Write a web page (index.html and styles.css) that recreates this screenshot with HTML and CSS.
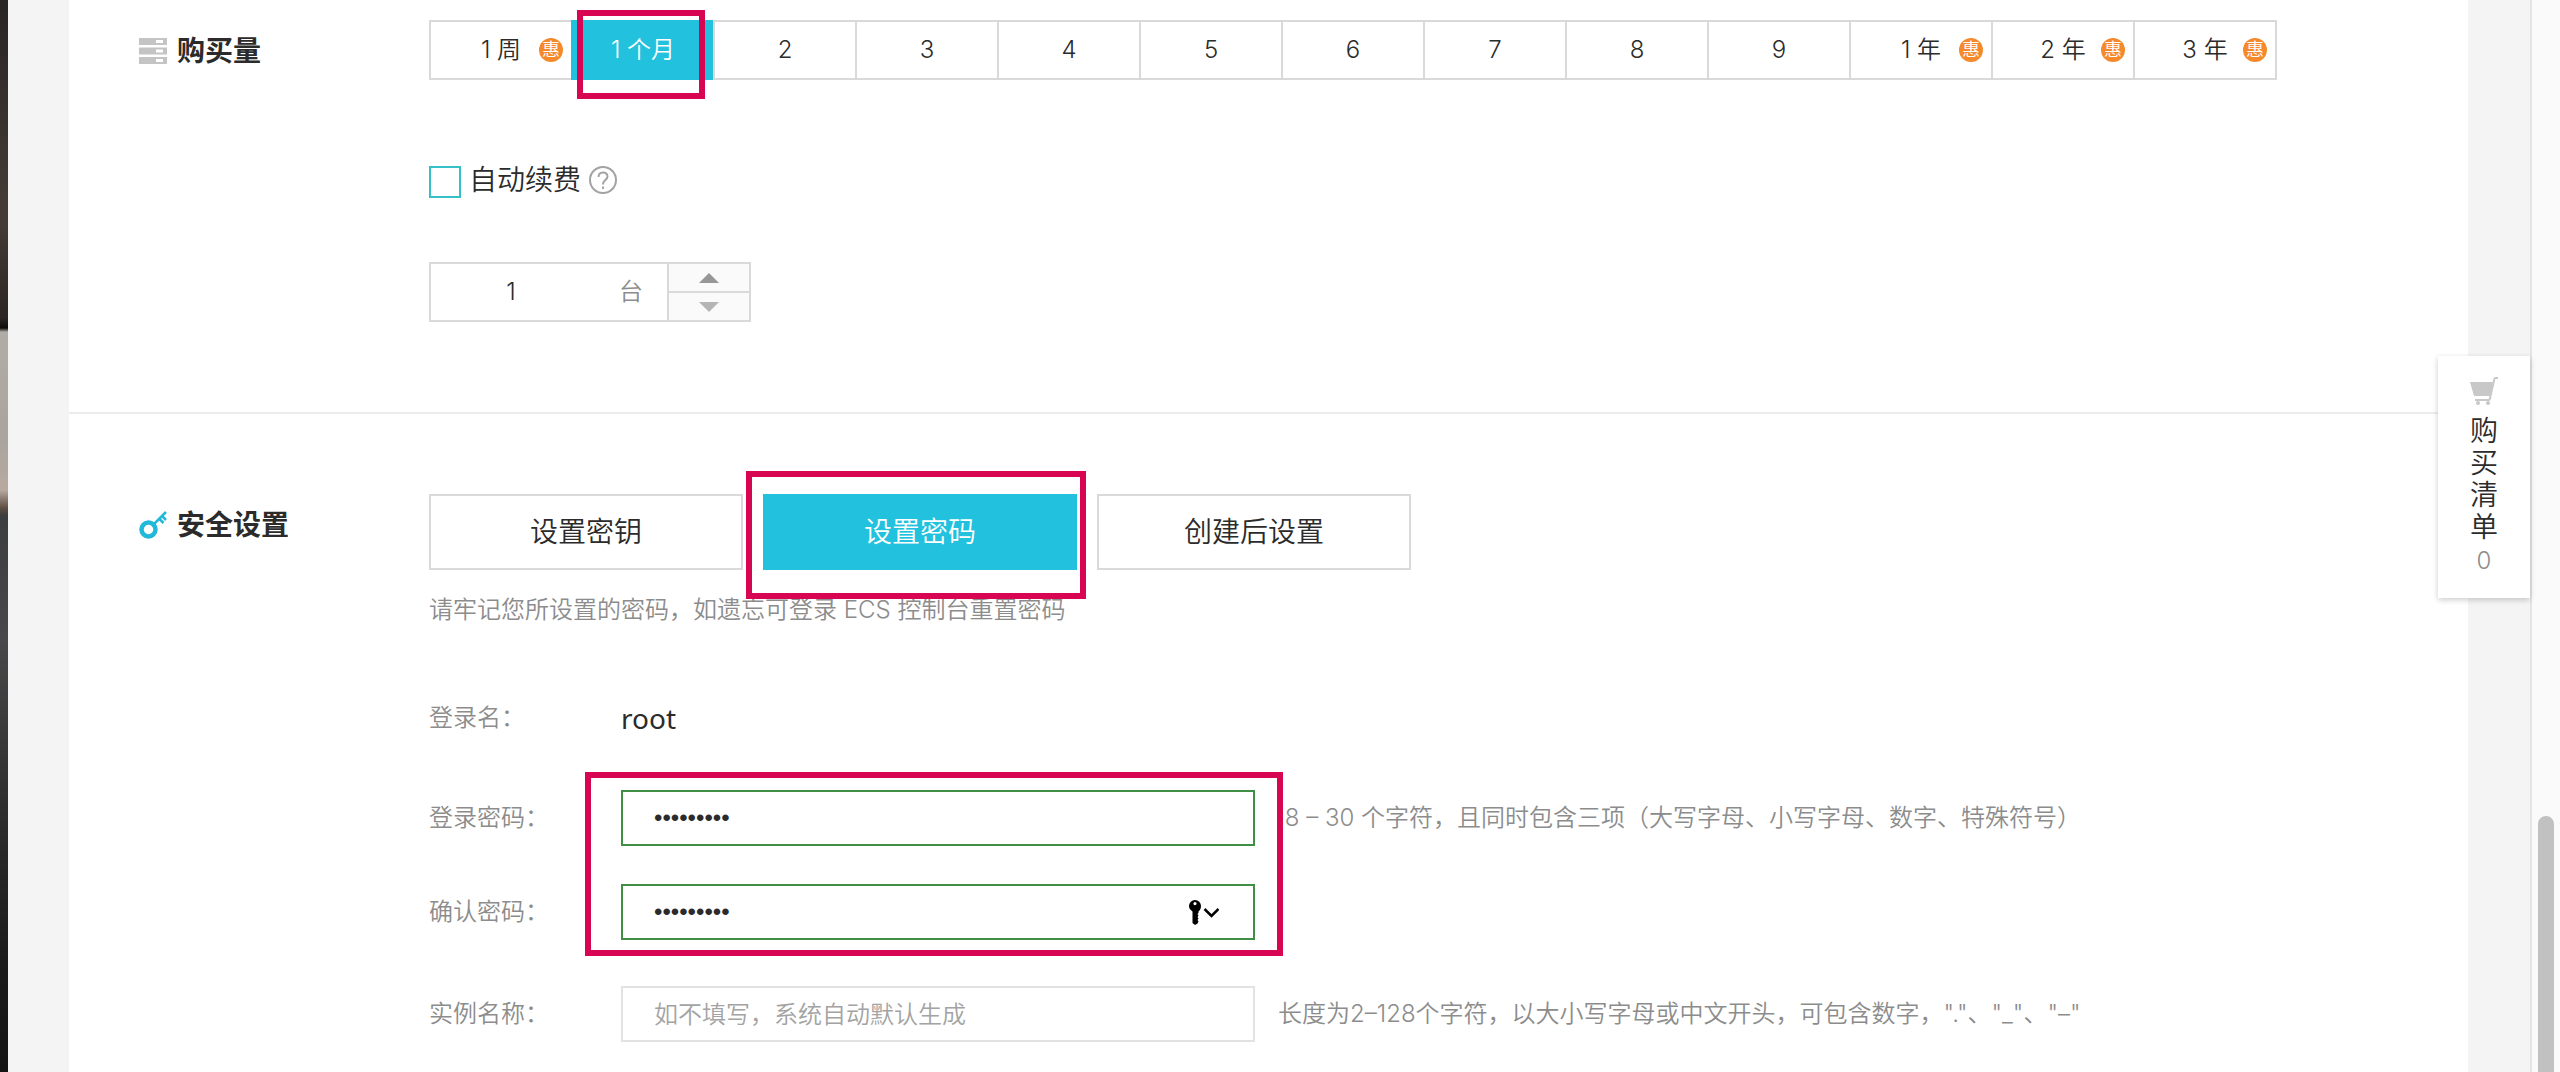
FILE: index.html
```html
<!DOCTYPE html>
<html lang="zh-CN">
<head>
<meta charset="utf-8">
<meta name="viewport" content="width=device-width, initial-scale=1">
<title>云服务器购买</title>
<link rel="stylesheet" href="styles.css">
</head>
<body>
<div class="desktop-edge"></div>
<div class="window">
  <main class="panel">
    <section class="section section-amount">
      <h2 class="section-title">
        <svg class="title-icon" viewBox="0 0 28 26" aria-hidden="true">
          <path fill="#c4c4c4" fill-rule="evenodd" d="M0 0h28v7H0zM17 2v3h7V2zM0 9.500h28v7H0zM17 11.500v3h7v-3zM0 19h28v7H0zM17 21v3h7v-3z"/>
        </svg>
        购买量
      </h2>
      <div class="section-body">
        <div class="durations">
          <button type="button" class="duration">1 周<span class="deal">惠</span></button>
          <button type="button" class="duration is-active">1 个月<span class="marker marker-month"></span></button>
          <button type="button" class="duration">2</button>
          <button type="button" class="duration">3</button>
          <button type="button" class="duration">4</button>
          <button type="button" class="duration">5</button>
          <button type="button" class="duration">6</button>
          <button type="button" class="duration">7</button>
          <button type="button" class="duration">8</button>
          <button type="button" class="duration">9</button>
          <button type="button" class="duration">1 年<span class="deal">惠</span></button>
          <button type="button" class="duration">2 年<span class="deal">惠</span></button>
          <button type="button" class="duration">3 年<span class="deal">惠</span></button>
        </div>
        <div class="renew">
          <input type="checkbox" id="renew" class="renew-box">
          <label for="renew" class="renew-label">自动续费</label>
          <svg class="help" viewBox="0 0 28 28" fill="none" stroke="#a3a3a3" stroke-width="2" aria-hidden="true">
            <circle cx="14" cy="14" r="13"/>
            <path d="M9.500 11c0-6 9-6 9-.6 0 3.600-4.500 3.800-4.500 8"/>
            <path d="M14 20.500v2.500"/>
          </svg>
        </div>
        <div class="stepper">
          <input type="text" class="stepper-value" value="1" aria-label="数量">
          <span class="stepper-unit">台</span>
          <div class="stepper-buttons">
            <button type="button" class="step step-up" aria-label="增加"></button>
            <button type="button" class="step step-down" aria-label="减少"></button>
          </div>
        </div>
      </div>
    </section>

    <section class="section section-security">
      <h2 class="section-title">
        <svg class="title-icon" viewBox="0 0 28 28" fill="none" stroke="#22b8da" aria-hidden="true">
          <circle cx="9.500" cy="18.500" r="7" stroke-width="4.500"/>
          <path stroke-width="2.500" d="M14.500 13.500 27 1M20.500 8l4 4M23 5l4 4"/>
        </svg>
        安全设置
      </h2>
      <div class="section-body">
        <div class="modes">
          <button type="button" class="mode">设置密钥</button>
          <button type="button" class="mode is-active">设置密码<span class="marker marker-mode"></span></button>
          <button type="button" class="mode">创建后设置</button>
        </div>
        <p class="note">请牢记您所设置的密码，如遗忘可登录 ECS 控制台重置密码</p>
        <div class="row row-user">
          <span class="row-label">登录名：</span>
          <span class="username">root</span>
        </div>
        <div class="passwords">
          <div class="row">
            <label class="row-label" for="pwd">登录密码：</label>
            <input type="password" id="pwd" class="field is-valid" value="Passw0rd!">
            <span class="hint">&nbsp;8 – 30 个字符，且同时包含三项（大写字母、小写字母、数字、特殊符号）</span>
          </div>
          <div class="row">
            <label class="row-label" for="pwd2">确认密码：</label>
            <div class="field-wrap">
              <input type="password" id="pwd2" class="field is-valid" value="Passw0rd!">
              <svg class="key" viewBox="0 0 30 25" aria-hidden="true">
                <path fill="#000" fill-rule="evenodd" d="M6 0a6 6 0 0 1 6 6c0 2.500-1 4.300-2.500 5.500v1.500l-1 1 1 1.500-1 1.500 1 1.500-1 1.500 1 1.500-1 2L6 25l-2.500-2V11.500C1.500 10 0 8.500 0 6a6 6 0 0 1 6-6zm0 2a1.600 1.600 0 1 0 0 3.200A1.600 1.600 0 0 0 6 2z"/>
                <path fill="none" stroke="#000" stroke-width="2.500" d="m15.500 9 7 7 7-7"/>
              </svg>
            </div>
          </div>
          <div class="marker marker-passwords"></div>
        </div>
        <div class="row row-name">
          <label class="row-label" for="name">实例名称：</label>
          <input type="text" id="name" class="field" placeholder="如不填写，系统自动默认生成">
          <span class="hint">长度为2–128个字符，以大小写字母或中文开头，可包含数字，"."、"_"、"–"</span>
        </div>
      </div>
    </section>
  </main>

  <aside class="cart">
    <svg class="cart-icon" viewBox="0 0 28 28" aria-hidden="true">
      <path fill="#c8c8c8" d="M0 5h23l-3 14H4z"/>
      <path fill="none" stroke="#c8c8c8" stroke-width="2" d="M28 1h-2.500q-1 0-1.300 1.500L20 21.500q-.3 1.500-1.500 1.500H5"/>
      <circle cx="8" cy="26" r="2" fill="#c8c8c8"/>
      <circle cx="18" cy="26" r="2" fill="#c8c8c8"/>
    </svg>
    <span class="cart-text">购买清单</span>
    <span class="cart-count">0</span>
  </aside>
</div>
<div class="scroll-track"><div class="scroll-thumb"></div></div>
</body>
</html>
```
FILE: styles.css
```css
* {
  box-sizing: border-box;
}

body {
  margin: 0;
  min-height: 100vh;
  display: flex;
  background: #f4f4f4;
  color: #2b2b2b;
  font-family: Inter, "Noto Sans CJK SC", sans-serif;
  font-size: 24px;
  font-weight: 350;
  line-height: 36px;
}

button,
input {
  margin: 0;
  padding: 0;
  border-radius: 0;
  color: inherit;
  font: inherit;
}

/* strip of desktop wallpaper beside the browser window */
.desktop-edge {
  flex: none;
  width: 8px;
  background: linear-gradient(#292523 0, #38322f 120px, #463c37 220px, #2b2523 318px, #0d0b08 328px, #b0aca6 332px, #aaa49e 440px, #b7aaa0 490px, #5e4d43 508px, #3c3d3f 516px, #48484a 640px, #2f2f30 800px, #1b1b1c 960px, #141415 100%);
}

.window {
  position: relative;
  flex: 1;
  min-width: 0;
  padding: 0 62px 0 61px;
}

.panel {
  min-height: 100%;
  background: #fff;
}

.section {
  display: grid;
  grid-template-columns: 290px 1fr;
  padding-left: 70px;
}

.section-amount {
  padding-top: 20px;
  padding-bottom: 90px;
  border-bottom: 2px solid #ececec;
}

.section-security {
  padding-top: 80px;
  padding-bottom: 30px;
}

.section-title {
  display: flex;
  align-items: center;
  gap: 10px;
  height: 62px;
  margin: 0;
  font-size: 28px;
  font-weight: 600;
}

.title-icon {
  width: 28px;
}

.durations {
  display: flex;
}

.duration {
  position: relative;
  width: 142px;
  height: 60px;
  border: 2px solid #d9d9d9;
  border-width: 2px 0 2px 2px;
  background: #fff;
}

.duration:last-child {
  width: 144px;
  border-right-width: 2px;
}

.duration.is-active,
.mode.is-active {
  border-color: #22c1dd;
  background: #22c1dd;
  color: #fff;
}

.deal {
  position: absolute;
  top: 16px;
  right: 8px;
  width: 24px;
  height: 24px;
  border-radius: 50%;
  background: #f58a2c;
  color: #fff;
  font-size: 18px;
  line-height: 24px;
}

/* red annotation frames */
.marker {
  position: absolute;
  border: 6px solid #d80553;
  pointer-events: none;
}

.marker-month {
  top: -12px;
  right: 8px;
  bottom: -21px;
  left: 4px;
}

.marker-mode {
  top: -25px;
  right: -11px;
  bottom: -31px;
  left: -19px;
}

.marker-passwords {
  top: -18px;
  bottom: -16px;
  left: 156px;
  width: 698px;
}

.renew {
  display: flex;
  align-items: flex-start;
  height: 32px;
  margin-top: 86px;
}

.renew-box {
  width: 32px;
  height: 32px;
  border: 2px solid #35bfc6;
  background: #fff;
  appearance: none;
}

.renew-label {
  margin: 0 8px;
  font-size: 28px;
  line-height: 28px;
}

.help {
  width: 28px;
}

.stepper {
  display: flex;
  align-items: center;
  width: 322px;
  height: 60px;
  margin-top: 64px;
  border: 2px solid #d9d9d9;
}

.stepper-value {
  width: 160px;
  border: 0;
  text-align: center;
}

.stepper-unit {
  flex: 1;
  padding-left: 28px;
  color: #8c8c8c;
}

.stepper-buttons {
  display: flex;
  flex-direction: column;
  width: 82px;
  height: 100%;
  border-left: 2px solid #d9d9d9;
}

.step {
  display: flex;
  flex: 1;
  align-items: center;
  justify-content: center;
  border: 0;
  background: #fafafa;
}

.step-up {
  border-bottom: 2px solid #d9d9d9;
}

.step::before {
  border: 10px solid transparent;
  content: "";
}

.step-up::before {
  border-top-width: 0;
  border-bottom-color: #979797;
}

.step-down::before {
  border-bottom-width: 0;
  border-top-color: #b5b5b5;
}

.modes {
  display: flex;
  gap: 20px;
}

.mode {
  position: relative;
  width: 314px;
  height: 76px;
  border: 2px solid #d9d9d9;
  background: #fff;
  font-size: 28px;
}

.note {
  margin: 22px 0 0;
  color: #8c8c8c;
}

.row {
  display: flex;
  align-items: center;
}

.row-user {
  margin-top: 72px;
}

.row-label {
  flex: none;
  width: 192px;
  color: #8c8c8c;
}

.username {
  font-family: "Noto Sans", sans-serif;
  font-size: 28px;
  font-weight: 400;
}

.passwords {
  position: relative;
  display: grid;
  gap: 38px;
  margin-top: 54px;
}

.row-name {
  margin-top: 46px;
}

.field-wrap {
  position: relative;
}

.field {
  display: block;
  width: 634px;
  height: 56px;
  padding: 0 31px;
  border: 2px solid #e2e2e2;
  background: #fff;
}

.field.is-valid {
  border-color: #3f8f45;
  font-family: "Liberation Sans", sans-serif;
}

.field::placeholder {
  color: #a3a3a3;
}

.key {
  position: absolute;
  top: 16px;
  right: 36px;
  width: 30px;
}

.hint {
  margin-left: 23px;
  color: #8c8c8c;
  white-space: nowrap;
}

.cart {
  position: absolute;
  top: 356px;
  right: 0;
  display: flex;
  flex-direction: column;
  align-items: center;
  width: 92px;
  padding: 21px 0 19px;
  background: #fff;
  box-shadow: 0 2px 6px rgba(0, 0, 0, 0.2);
}

.cart-icon {
  width: 28px;
  height: 28px;
}

.cart-text {
  width: 28px;
  margin-top: 10px;
  font-size: 28px;
  line-height: 32px;
}

.cart-count {
  color: #8c8c8c;
}

.scroll-track {
  flex: none;
  width: 30px;
  padding: 816px 6px 0;
  border-left: 2px solid #e4e4e4;
  background: #fafafa;
}

.scroll-thumb {
  width: 16px;
  height: 100%;
  border-radius: 8px 8px 0 0;
  background: #c1c1c1;
}
```
